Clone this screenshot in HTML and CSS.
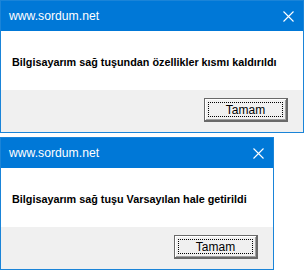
FILE: index.html
```html
<!DOCTYPE html>
<html>
<head>
<meta charset="utf-8">
<link rel="stylesheet" href="styles.css">
</head>
<body>
<div class="stack">
  <div class="dialog wide">
    <div class="title">
      <span class="title-text">www.sordum.net</span>
      <svg class="close" width="11" height="11" viewBox="0 0 11 11"><path d="M0.5 0.5 L10.5 10.5 M10.5 0.5 L0.5 10.5" stroke="#fff" stroke-width="1.1" fill="none"/></svg>
    </div>
    <div class="content">Bilgisayarım sağ tuşundan özellikler kısmı kaldırıldı</div>
    <div class="footer"><button class="btn"><span class="focus">Tamam</span></button></div>
  </div>
  <div class="dialog narrow">
    <div class="title">
      <span class="title-text">www.sordum.net</span>
      <svg class="close" width="11" height="11" viewBox="0 0 11 11"><path d="M0.5 0.5 L10.5 10.5 M10.5 0.5 L0.5 10.5" stroke="#fff" stroke-width="1.1" fill="none"/></svg>
    </div>
    <div class="content">Bilgisayarım sağ tuşu Varsayılan hale getirildi</div>
    <div class="footer"><button class="btn"><span class="focus">Tamam</span></button></div>
  </div>
</div>
</body>
</html>
```
FILE: styles.css
```css
html, body {
  margin: 0;
  padding: 0;
  background: #ffffff;
}
.stack {
  display: flex;
  flex-direction: column;
  gap: 4px;
}
.dialog {
  box-sizing: border-box;
  height: 133px;
  border: 1px solid #1a84d8;
  display: flex;
  flex-direction: column;
}
.wide { width: 304px; }
.narrow { width: 274px; }
.title {
  height: 30px;
  background: #0078d7;
  display: flex;
  align-items: center;
  padding: 0 9px 0 8px;
  flex-shrink: 0;
}
.title-text {
  color: #ffffff;
  font-family: "Liberation Sans", Arial, sans-serif;
  font-size: 12.2px;
  margin-top: -1px;
}
.close {
  margin-left: auto;
  display: block;
}
.content {
  height: 59px;
  background: #ffffff;
  display: flex;
  align-items: center;
  padding: 2px 0 0 11px;
  box-sizing: border-box;
  font-family: "Liberation Sans", Arial, sans-serif;
  font-weight: bold;
  font-size: 10.8px;
  color: #000;
  flex-shrink: 0;
}
.footer {
  flex: 1;
  background: #f0f0f0;
  display: flex;
  justify-content: flex-end;
  align-items: flex-start;
  padding: 8px 15px 0 0;
}
.btn {
  box-sizing: border-box;
  width: 84px;
  height: 24px;
  margin: 0;
  padding: 3px;
  background: #f0f0f0;
  border: 1px solid #6a6a6a;
  border-right-width: 2px;
  border-bottom-width: 2px;
  box-shadow: inset 1px 1px 0 #ffffff, inset -1px -1px 0 #a0a0a0;
  display: flex;
}
.focus {
  flex: 1;
  border: 1px dotted #000;
  display: flex;
  align-items: center;
  justify-content: center;
  font-family: "Liberation Sans", Arial, sans-serif;
  font-size: 12px;
  color: #000;
}
```
